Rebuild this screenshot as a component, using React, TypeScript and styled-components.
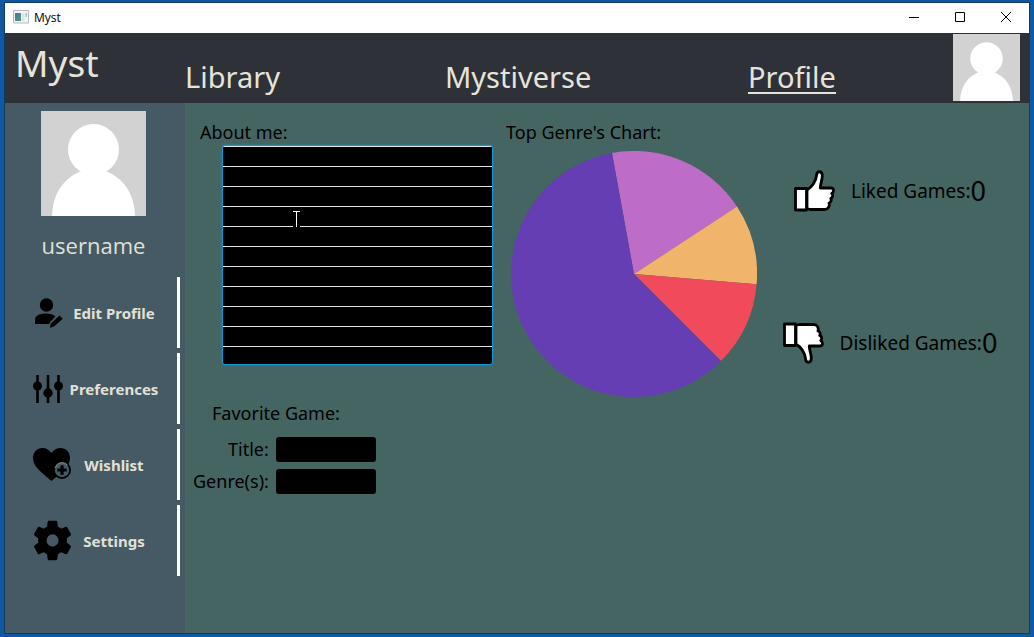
import React from "react";
import styled, { createGlobalStyle } from "styled-components";

const hand = `"Comic Sans MS", "Noto Sans", "Open Sans", sans-serif`;
const plain = `"Segoe UI", "Open Sans", "Noto Sans", sans-serif`;

const GlobalStyle = createGlobalStyle`
  *, *::before, *::after { box-sizing: border-box; }
  body { margin: 0; background: #1059a2; }
  h1, h2, p { margin: 0; font-weight: 400; }
  svg { display: block; flex: none; }
`;

const Desktop = styled.div`
  min-height: 100vh;
  display: flex;
  padding: 2px 4px 3px;
  background: #1059a2;
`;

const Window = styled.div`
  flex: 1;
  display: flex;
  flex-direction: column;
  border: 1px solid #123a5c;
  background: #456562;
`;

const TitleBar = styled.div`
  display: flex;
  align-items: center;
  height: 30px;
  padding: 0 0 2px 8px;
  background: #fff;
  color: #000;
  font: 12px ${plain};
`;

const WindowTitle = styled.span`
  flex: 1;
  margin-left: 5px;
`;

const WindowButton = styled.button`
  display: flex;
  align-items: center;
  justify-content: center;
  width: 46px;
  height: 28px;
  padding: 0;
  border: 0;
  background: none;
`;

const Header = styled.header`
  display: grid;
  grid-template-columns: 180px 260fr 303fr 205fr 76px;
  height: 70px;
  background: #2f3138;
  color: #e6e4da;
  font-family: ${hand};
`;

const Brand = styled.h1`
  padding-left: 10px;
  font-size: 37px;
  line-height: 60px;
`;

const NavLink = styled.a<{ $active?: boolean }>`
  justify-self: start;
  align-self: start;
  margin-top: 28px;
  font-size: 29px;
  line-height: 31px;
  color: inherit;
  text-decoration: none;
  border-bottom: 2px solid ${(p) => (p.$active ? "#e6e4da" : "transparent")};
`;

const AvatarLink = styled.a`
  padding-top: 1px;
`;

const Body = styled.div`
  flex: 1;
  display: flex;
`;

const Sidebar = styled.aside`
  flex: none;
  display: flex;
  flex-direction: column;
  width: 180px;
  padding: 8px 5px 0 0;
  background: #455a64;
  color: #e2e0d6;
`;

const UserCard = styled.div`
  display: flex;
  flex-direction: column;
  align-items: center;
  padding-left: 2px;
`;

const UserName = styled.p`
  height: 61px;
  font: 400 22px/58px ${plain};
`;

const Menu = styled.nav`
  display: flex;
  flex-direction: column;
  gap: 5px;
`;

const MenuButton = styled.button`
  display: grid;
  grid-template-columns: 34px 1fr;
  align-items: center;
  height: 71px;
  padding: 0 16px 0 28px;
  border: 0;
  border-right: 3px solid #fff;
  background: none;
  color: inherit;
  font: 700 15px ${hand};
  white-space: nowrap;
`;

const Main = styled.main`
  flex: 1;
  display: grid;
  grid-template-columns: 321fr 264fr 259fr;
  align-items: start;
  padding-top: 16px;
  color: #000;
  font: 18px/26px ${hand};
`;

const About = styled.section`
  padding-left: 15px;
`;

const NoteBox = styled.div`
  position: relative;
  width: 271px;
  margin-left: 22px;
`;

const Notes = styled.textarea`
  display: block;
  width: 100%;
  height: 220px;
  padding: 0 6px;
  border: 1px solid #0f97d6;
  border-radius: 3px;
  outline: 0;
  resize: none;
  background: repeating-linear-gradient(#e4e4e4 0 1px, #000 1px 20px);
  color: #fff;
  font: 14px/20px ${plain};
  box-shadow: 0 0 2px #0f97d6;
`;

const Pointer = styled.svg`
  position: absolute;
  left: 71px;
  top: 66px;
`;

const FieldLabel = styled.label`
  display: block;
`;

const Favorite = styled.section`
  padding: 35px 0 0 8px;
`;

const FavoriteTitle = styled.h2`
  padding-left: 19px;
  font-size: 18px;
`;

const Fields = styled.div`
  display: grid;
  grid-template-columns: max-content 100px;
  gap: 7px;
  margin-top: 11px;
  line-height: 25px;
  text-align: right;
`;

const Field = styled.input`
  width: 100px;
  height: 25px;
  padding: 0 6px;
  border: 0;
  border-radius: 3px;
  background: #000;
  color: #fff;
  font: 14px ${plain};
`;

const Genres = styled.section``;

const GenresTitle = styled.h2`
  font-size: 18px;
`;

const Pie = styled.svg`
  margin: 6px 0 0 5px;
`;

const Stats = styled.section`
  display: flex;
  flex-direction: column;
  align-items: center;
  gap: 110px;
  padding: 51px 19px 0 0;
`;

const Stat = styled.p`
  display: flex;
  align-items: center;
  height: 42px;
  font-size: 19px;
  white-space: nowrap;
`;

const StatLabel = styled.span`
  margin-left: 16px;
`;

const StatValue = styled.span`
  font-size: 27px;
`;

const Avatar = ({ size }: { size: number }) => (
  <svg width={size} height={size} viewBox="0 0 105 105" role="img" aria-label="Avatar">
    <rect width="105" height="105" fill="#d2d2d2" />
    <circle cx="52.5" cy="38.5" r="25.5" fill="#fff" />
    <path d="M11 105C12 81 23 68 39 60.500H66C82 68 93 81 94 105Z" fill="#fff" />
  </svg>
);

const AppIcon = () => (
  <svg width="16" height="14" viewBox="0 0 16 14">
    <path d="M.5.5h15v12.500H.5z" fill="#f4f4f6" stroke="#b5b8bc" />
    <path d="M2 3h6v8H2z" fill="#4b8f86" />
    <path d="M2 3h6L2 9z" fill="#4a7ca8" />
    <path d="M9 3h2.500v8H9z" fill="#dfe2e6" />
    <path d="M12.500 3H14v4h-1.500z" fill="#9fcbb9" />
  </svg>
);

const EditIcon = () => (
  <svg width="30" height="30" viewBox="0 0 30 30">
    <circle cx="13.500" cy="7" r="6.700" />
    <path d="M2 26V22C2 17.500 7 15.500 13 15.500c4 0 7.500 1 9.500 3L17.500 23.500 16 26Z" />
    <path d="M26.500 17.500l3.300 3.300-8.800 7.700-4.200 1.300 1-4.300z" />
  </svg>
);

const SlidersIcon = () => (
  <svg width="30" height="30" viewBox="0 0 30 30">
    <path d="M4.500 1v28M15 1v28M25.500 1v28" stroke="#000" strokeWidth="2.600" />
    <circle cx="4.500" cy="12" r="4.500" />
    <circle cx="15" cy="19" r="4.700" />
    <circle cx="25.500" cy="12" r="4.500" />
  </svg>
);

const HeartIcon = () => (
  <svg width="38" height="34" viewBox="0 0 38 34">
    <path d="M18.500 33C8 24 0 18.500 0 10 0 4 4 0 9.500 0c4 0 7 2 9 5 2-3 5-5 9-5C33 0 37 4 37 10c0 8-8 14-18.500 23Z" />
    <circle cx="29" cy="22" r="9" />
    <circle cx="29" cy="22" r="7.200" fill="#455a64" />
    <path d="M29 17.300v9.400M24.300 22h9.400" stroke="#000" strokeWidth="3.200" />
    <path d="M22 20a7.300 7.300 0 0 1 12.500-3" fill="none" stroke="#8b979c" strokeWidth="1" />
  </svg>
);

const GearIcon = () => (
  <svg width="39" height="41" viewBox="2.200 2 19.600 20" preserveAspectRatio="none">
    <path d="M19.140 12.940c.040-.3.060-.610.060-.940 0-.320-.020-.640-.070-.940l2.030-1.580c.180-.140.230-.410.120-.610l-1.920-3.320c-.120-.220-.370-.290-.590-.220l-2.390.960c-.5-.380-1.030-.7-1.620-.940l-.360-2.540c-.040-.240-.240-.410-.480-.410h-3.840c-.240 0-.430.170-.470.410l-.360 2.540c-.590.240-1.130.570-1.620.940l-2.390-.960c-.220-.080-.470 0-.590.220L2.740 8.870c-.120.210-.080.470.120.610l2.030 1.580c-.050.3-.090.630-.090.940s.020.640.070.940l-2.030 1.580c-.180.140-.230.410-.120.610l1.920 3.320c.120.220.370.290.590.220l2.390-.960c.5.380 1.030.7 1.620.940l.360 2.540c.050.240.240.410.480.410h3.840c.240 0 .440-.170.470-.410l.360-2.540c.590-.240 1.130-.560 1.620-.940l2.390.960c.220.080.470 0 .590-.220l1.920-3.320c.120-.220.070-.470-.120-.610zM12 15a3 3 0 1 1 0-6 3 3 0 0 1 0 6z" />
  </svg>
);

const Thumb = ({ down }: { down?: boolean }) => (
  <svg width="41" height="42" viewBox="0 0 41 42">
    <g
      transform={down ? "matrix(1 0 0 -1 0 42)" : undefined}
      fill="#fff"
      stroke="#000"
      strokeWidth="2.800"
      strokeLinejoin="round"
    >
      <path d="M13 20C18 17 22 11 22.500 5.500 22.500 .5 28 .5 28.300 5.500c0 5-2 8-2 12.500H37c3.500 0 3 4 .8 5.500 1.500 2 1 4-1 5 1 2 0 4-1.800 4.500 1 3-1 6.500-4 6.500H16l-3-1Z" />
      <path d="M1.500 18.500H12.500V40H1.500Z" />
    </g>
  </svg>
);

const menu = [
  { label: "Edit Profile", icon: <EditIcon /> },
  { label: "Preferences", icon: <SlidersIcon /> },
  { label: "Wishlist", icon: <HeartIcon /> },
  { label: "Settings", icon: <GearIcon /> },
];

const slices = [
  { color: "#bd6dc8", d: "M123 123L101 1.980A123 123 0 0 1 226 55.500Z" },
  { color: "#f0b46a", d: "M123 123L226 55.500A123 123 0 0 1 245.600 133.300Z" },
  { color: "#f14a5b", d: "M123 123L245.600 133.300A123 123 0 0 1 210 210Z" },
  { color: "#663eb4", d: "M123 123L210 210A123 123 0 1 1 101 1.980Z" },
];

export default function App() {
  return (
    <Desktop>
      <GlobalStyle />
      <Window>
        <TitleBar>
          <AppIcon />
          <WindowTitle>Myst</WindowTitle>
          <WindowButton aria-label="Minimize">
            <svg width="10" height="10">
              <path d="M0 5.500h10" stroke="#000" />
            </svg>
          </WindowButton>
          <WindowButton aria-label="Maximize">
            <svg width="10" height="10">
              <path d="M.5.5h9v9h-9z" stroke="#000" fill="none" />
            </svg>
          </WindowButton>
          <WindowButton aria-label="Close">
            <svg width="10" height="10">
              <path d="M0 0l10 10M10 0L0 10" stroke="#000" />
            </svg>
          </WindowButton>
        </TitleBar>
        <Header>
          <Brand>Myst</Brand>
          <NavLink href="#library">Library</NavLink>
          <NavLink href="#mystiverse">Mystiverse</NavLink>
          <NavLink href="#profile" $active aria-current="page">
            Profile
          </NavLink>
          <AvatarLink href="#account">
            <Avatar size={67} />
          </AvatarLink>
        </Header>
        <Body>
          <Sidebar>
            <UserCard>
              <Avatar size={105} />
              <UserName>username</UserName>
            </UserCard>
            <Menu>
              {menu.map((item) => (
                <MenuButton key={item.label}>
                  {item.icon}
                  <span>{item.label}</span>
                </MenuButton>
              ))}
            </Menu>
          </Sidebar>
          <Main>
            <div>
              <About>
                <FieldLabel htmlFor="about">About me:</FieldLabel>
                <NoteBox>
                  <Notes id="about" spellCheck={false} />
                  <Pointer width="8" height="17" aria-hidden="true">
                    <path d="M0 15h7v2H0z" fill="#000" />
                    <path d="M0 .5h7M3.500 0v16" stroke="#fff" fill="none" />
                  </Pointer>
                </NoteBox>
              </About>
              <Favorite>
                <FavoriteTitle>Favorite Game:</FavoriteTitle>
                <Fields>
                  <label htmlFor="title">Title:</label>
                  <Field id="title" />
                  <label htmlFor="genres">Genre(s):</label>
                  <Field id="genres" />
                </Fields>
              </Favorite>
            </div>
            <Genres>
              <GenresTitle>Top Genre's Chart:</GenresTitle>
              <Pie width="246" height="246" viewBox="0 0 246 246" role="img" aria-label="Top genres">
                {slices.map((s) => (
                  <path key={s.color} d={s.d} fill={s.color} />
                ))}
              </Pie>
            </Genres>
            <Stats>
              <Stat>
                <Thumb />
                <StatLabel>Liked Games:</StatLabel>
                <StatValue>0</StatValue>
              </Stat>
              <Stat>
                <Thumb down />
                <StatLabel>Disliked Games:</StatLabel>
                <StatValue>0</StatValue>
              </Stat>
            </Stats>
          </Main>
        </Body>
      </Window>
    </Desktop>
  );
}
